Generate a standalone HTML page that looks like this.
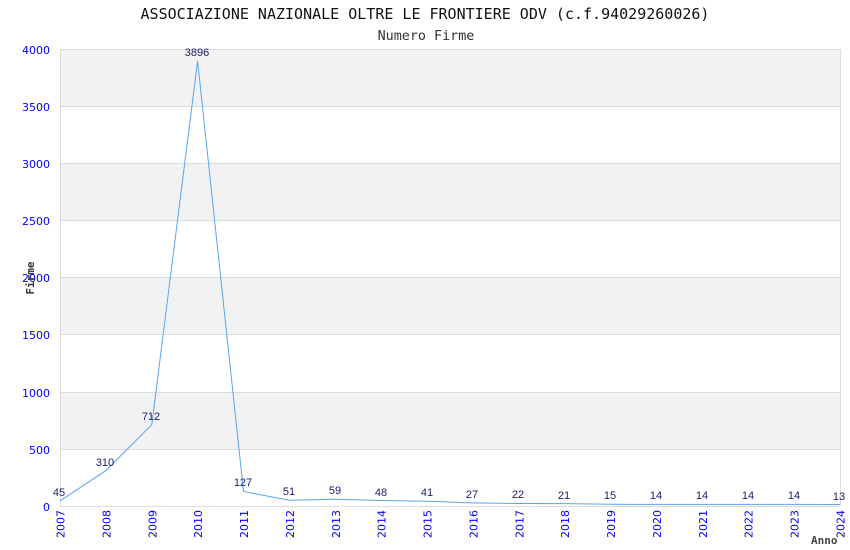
<!DOCTYPE html>
<html><head><meta charset="utf-8"><style>body{margin:0;background:#fff}svg{display:block}</style></head><body>
<svg width="850" height="550" xmlns="http://www.w3.org/2000/svg">
<rect width="850" height="550" fill="#fff"/>
<g fill="#f2f2f2">
<rect x="60" y="49" width="780" height="57"/><rect x="60" y="163" width="780" height="57"/>
<rect x="60" y="277" width="780" height="57"/><rect x="60" y="392" width="780" height="57"/>
</g>
<g stroke="#dcdcdc" stroke-width="1">
<line x1="60" y1="49.5" x2="840" y2="49.5"/><line x1="60" y1="106.5" x2="840" y2="106.5"/>
<line x1="60" y1="163.5" x2="840" y2="163.5"/><line x1="60" y1="220.5" x2="840" y2="220.5"/>
<line x1="60" y1="277.5" x2="840" y2="277.5"/><line x1="60" y1="334.5" x2="840" y2="334.5"/>
<line x1="60" y1="392.5" x2="840" y2="392.5"/><line x1="60" y1="449.5" x2="840" y2="449.5"/>
<line x1="60.5" y1="49" x2="60.5" y2="506"/><line x1="840.5" y1="49" x2="840.5" y2="506"/>
<line x1="60" y1="506.5" x2="840" y2="506.5"/>
</g>
<polyline fill="none" stroke="#5aa5ee" stroke-width="1" points="60,500.9 105.9,470.6 151.8,424.7 197.6,60.9 243.5,491.5 289.4,500.2 335.3,499.3 381.2,500.5 427.1,501.3 472.9,502.9 518.8,503.5 564.7,503.6 610.6,504.3 656.5,504.4 702.4,504.4 748.2,504.4 794.1,504.4 840,504.5"/>
<g font-family="Liberation Sans, sans-serif" font-size="11" fill="#1a1a66" text-anchor="middle">
<text x="59" y="496">45</text><text x="105" y="466">310</text><text x="151" y="420">712</text>
<text x="197" y="56">3896</text><text x="243" y="486">127</text><text x="289" y="495">51</text>
<text x="335" y="494">59</text><text x="381" y="496">48</text><text x="427" y="496">41</text>
<text x="472" y="498">27</text><text x="518" y="498">22</text><text x="564" y="499">21</text>
<text x="610" y="499">15</text><text x="656" y="499">14</text><text x="702" y="499">14</text>
<text x="748" y="499">14</text><text x="794" y="499">14</text><text x="839" y="500">13</text>
</g>
<g font-family="DejaVu Sans, sans-serif" font-size="11" fill="#0000ff" text-anchor="end">
<text x="50" y="54">4000</text><text x="50" y="111">3500</text><text x="50" y="168">3000</text>
<text x="50" y="225">2500</text><text x="50" y="282">2000</text><text x="50" y="339">1500</text>
<text x="50" y="397">1000</text><text x="50" y="454">500</text><text x="50" y="511">0</text>
</g>
<g font-family="DejaVu Sans, sans-serif" font-size="11" fill="#0000ff" text-anchor="end">
<text transform="translate(64.5,510) rotate(-90)">2007</text>
<text transform="translate(110.4,510) rotate(-90)">2008</text>
<text transform="translate(156.3,510) rotate(-90)">2009</text>
<text transform="translate(202.1,510) rotate(-90)">2010</text>
<text transform="translate(248,510) rotate(-90)">2011</text>
<text transform="translate(293.9,510) rotate(-90)">2012</text>
<text transform="translate(339.8,510) rotate(-90)">2013</text>
<text transform="translate(385.7,510) rotate(-90)">2014</text>
<text transform="translate(431.6,510) rotate(-90)">2015</text>
<text transform="translate(477.4,510) rotate(-90)">2016</text>
<text transform="translate(523.3,510) rotate(-90)">2017</text>
<text transform="translate(569.2,510) rotate(-90)">2018</text>
<text transform="translate(615.1,510) rotate(-90)">2019</text>
<text transform="translate(661,510) rotate(-90)">2020</text>
<text transform="translate(706.9,510) rotate(-90)">2021</text>
<text transform="translate(752.7,510) rotate(-90)">2022</text>
<text transform="translate(798.6,510) rotate(-90)">2023</text>
<text transform="translate(844.5,510) rotate(-90)">2024</text>
</g>
<text x="425" y="19" font-family="DejaVu Sans Mono, monospace" font-size="15" fill="#111" text-anchor="middle">ASSOCIAZIONE NAZIONALE OLTRE LE FRONTIERE ODV (c.f.94029260026)</text>
<text x="426" y="40" font-family="DejaVu Sans Mono, monospace" font-size="13.4" fill="#333" text-anchor="middle">Numero Firme</text>
<text transform="translate(34,278) rotate(-90)" font-family="DejaVu Sans Mono, monospace" font-size="11" font-weight="bold" fill="#333" text-anchor="middle">Firme</text>
<text x="811" y="544" font-family="DejaVu Sans Mono, monospace" font-size="11" font-weight="bold" fill="#444">Anno</text>
</svg>
</body></html>
